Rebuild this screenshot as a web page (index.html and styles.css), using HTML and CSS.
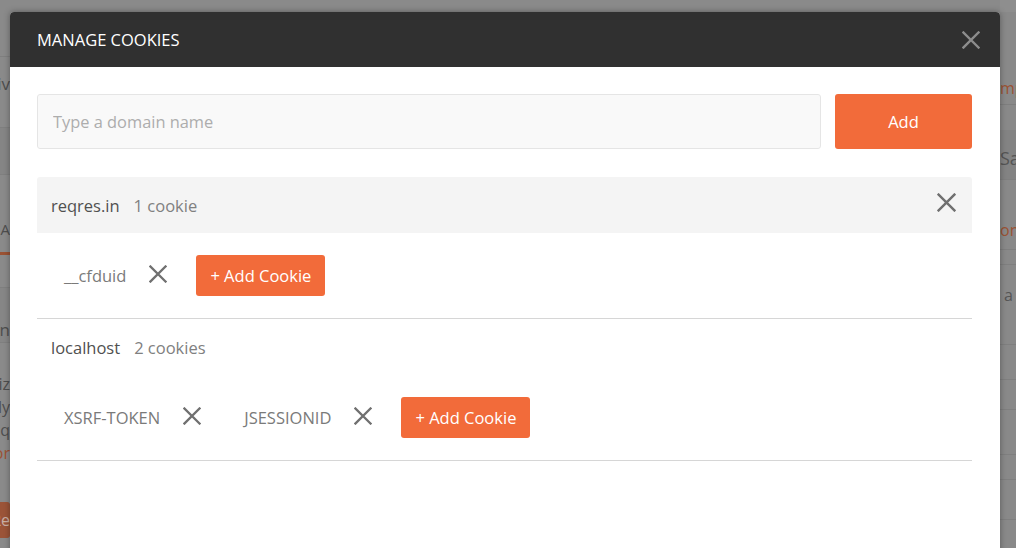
FILE: index.html
```html
<!DOCTYPE html>
<html>
<head>
<meta charset="utf-8">
<title>Manage Cookies</title>
<link rel="stylesheet" href="styles.css">
</head>
<body>
<div class="bg">
  <div class="strip strip-left">
    <div class="bl bl-top"></div>
    <div class="bl bl-title"><span class="bt">Priv</span></div>
    <div class="bl bl-band"></div>
    <div class="bl bl-tabs"><span class="bt bt-tab">A</span></div>
    <div class="bl bl-gap"></div>
    <div class="bl bl-band2"><span class="bt">n</span></div>
    <div class="bl-para">
      <span class="bt">iz</span>
      <span class="bt">lly</span>
      <span class="bt">q</span>
      <span class="bt bt-orange">or</span>
    </div>
    <div class="bl-btn"><span class="bt bt-light">Re</span></div>
  </div>
  <div class="mid"></div>
  <div class="strip strip-right">
    <div class="br br-top"></div>
    <div class="br br-imp"><span class="rt rt-orange">mp</span></div>
    <div class="br br-sp"></div>
    <div class="br br-band"><span class="rt rt-big">Sa</span></div>
    <div class="br br-on"><span class="rt rt-orange">on</span></div>
    <div class="br br-thin"></div>
    <div class="br br-a"><span class="rt rt-a">a</span></div>
    <div class="br br-r1"></div>
    <div class="br br-r2"></div>
    <div class="br br-r3"></div>
    <div class="br br-r4"></div>
    <div class="br br-r5"></div>
  </div>
</div>

<div class="modal">
  <div class="modal-header">
    <span class="modal-title">MANAGE COOKIES</span>
    <span class="modal-close">
      <svg width="18" height="18" viewBox="0 0 18 18"><path d="M1.5 1.5 L16.5 16.5 M16.5 1.5 L1.5 16.5" stroke="#8c8c8c" stroke-width="2.4" stroke-linecap="square" fill="none"/></svg>
    </span>
  </div>
  <div class="modal-body">
    <div class="add-row">
      <input class="domain-input" type="text" placeholder="Type a domain name">
      <button class="btn btn-add">Add</button>
    </div>

    <div class="domains">
      <div class="domain">
        <div class="domain-head selected">
          <span class="domain-name">reqres.in</span>
          <span class="domain-count">1 cookie</span>
          <span class="domain-remove">
            <svg width="19" height="19" viewBox="0 0 18 18"><path d="M1.5 1.5 L16.5 16.5 M16.5 1.5 L1.5 16.5" stroke="#707070" stroke-width="2.3" stroke-linecap="square" fill="none"/></svg>
          </span>
        </div>
        <div class="cookies">
          <span class="cookie">
            <span class="cookie-name">__cfduid</span>
            <svg class="cookie-x" width="18" height="18" viewBox="0 0 18 18"><path d="M1.5 1.5 L16.5 16.5 M16.5 1.5 L1.5 16.5" stroke="#707070" stroke-width="2.3" stroke-linecap="square" fill="none"/></svg>
          </span>
          <button class="btn btn-cookie">+ Add Cookie</button>
        </div>
      </div>

      <div class="domain">
        <div class="domain-head">
          <span class="domain-name">localhost</span>
          <span class="domain-count">2 cookies</span>
        </div>
        <div class="cookies">
          <span class="cookie">
            <span class="cookie-name">XSRF-TOKEN</span>
            <svg class="cookie-x" width="18" height="18" viewBox="0 0 18 18"><path d="M1.5 1.5 L16.5 16.5 M16.5 1.5 L1.5 16.5" stroke="#707070" stroke-width="2.3" stroke-linecap="square" fill="none"/></svg>
          </span>
          <span class="cookie">
            <span class="cookie-name">JSESSIONID</span>
            <svg class="cookie-x" width="18" height="18" viewBox="0 0 18 18"><path d="M1.5 1.5 L16.5 16.5 M16.5 1.5 L1.5 16.5" stroke="#707070" stroke-width="2.3" stroke-linecap="square" fill="none"/></svg>
          </span>
          <button class="btn btn-cookie">+ Add Cookie</button>
        </div>
      </div>
    </div>
  </div>
</div>
</body>
</html>
```

FILE: styles.css
```css
* { box-sizing: border-box; }

html, body {
  margin: 0;
  padding: 0;
  width: 1016px;
  height: 548px;
  overflow: hidden;
  font-family: "Open Sans", "Liberation Sans", sans-serif;
  background: #8a8a8a;
}

/* ---------- dimmed background app ---------- */
.bg {
  display: grid;
  grid-template-columns: 10px 990px 16px;
  height: 548px;
}

.strip {
  display: flex;
  flex-direction: column;
  overflow: hidden;
}

.bl, .br {
  display: flex;
  flex-shrink: 0;
  align-items: center;
  border-bottom: 1px solid #7f7f7f;
}

.strip-left .bl, .bl-btn {
  justify-content: flex-end;
}

.bt {
  white-space: nowrap;
  font-size: 17px;
  color: #4e4e4e;
}

.bl-top { height: 57px; }
.bl-title { height: 71px; align-items: flex-start; padding-top: 15px; }
.bl-band { height: 47px; background: #858585; }
.bl-tabs {
  height: 80px;
  border-bottom: 3px solid #9a5234;
  align-items: flex-start;
  padding-top: 44px;
}
.bt-tab { font-size: 15px; }
.bl-gap { height: 33px; }
.bl-band2 {
  height: 55px;
  background: #868686;
  align-items: flex-end;
  padding-bottom: 1px;
}
.bl-para {
  display: flex;
  flex-direction: column;
  align-items: flex-end;
  flex-shrink: 0;
  padding-top: 30px;
  height: 159px;
}
.bl-para .bt { line-height: 23px; font-size: 16px; }
.bt-orange { color: #9c5234; }
.bl-btn {
  display: flex;
  flex-shrink: 0;
  align-items: center;
  height: 36px;
  background: #9b5438;
  border-radius: 0 3px 3px 0;
}
.bt-light { color: #c9b0a6; font-size: 16px; }

.strip-right { background: #898989; }
.rt {
  white-space: nowrap;
  font-size: 16px;
  color: #555;
}
.rt-orange { color: #9b5234; }
.rt-big { font-size: 18px; }
.rt-a { padding-left: 4px; }

.br-top { height: 12px; border-bottom: none; background: #8e8e8e; }
.br-imp { height: 93px; padding-top: 60px; border-bottom-color: #7e7e7e; }
.br-sp { height: 25px; border-bottom: none; }
.br-band { height: 50px; background: #838383; padding-top: 6px; }
.br-on { height: 70px; padding-top: 30px; }
.br-thin { height: 15px; }
.br-a { height: 80px; padding-bottom: 20px; }
.br-r1 { height: 35px; }
.br-r2 { height: 30px; }
.br-r3 { height: 45px; }
.br-r4 { height: 25px; }
.br-r5 { height: 40px; }

/* ---------- modal ---------- */
.modal {
  position: absolute;
  left: 10px;
  top: 12px;
  width: 990px;
  height: 560px;
  background: #fff;
  border-radius: 4px 4px 0 0;
  box-shadow: 0 0 6px rgba(0, 0, 0, 0.35);
  overflow: hidden;
}

.modal-header {
  height: 55px;
  background: #303030;
  display: flex;
  align-items: center;
  justify-content: space-between;
  padding: 0 20px 0 27px;
}

.modal-title {
  color: #fff;
  font-size: 16.5px;
}

.modal-close {
  display: flex;
  width: 18px;
  height: 18px;
}

.modal-body {
  padding: 27px 28px 0 27px;
}

.add-row {
  display: flex;
  gap: 14px;
  height: 55px;
}

.domain-input {
  flex: 1;
  height: 55px;
  border: 1px solid #e5e5e5;
  border-radius: 3px;
  background: #f9f9f9;
  padding: 0 15px;
  font-family: "Open Sans", "Liberation Sans", sans-serif;
  font-size: 16.4px;
  color: #505050;
  outline: none;
}
.domain-input::placeholder { color: #adadad; }

.btn {
  border: none;
  border-radius: 3px;
  background: #f26b3a;
  color: #fff;
  font-family: "Open Sans", "Liberation Sans", sans-serif;
  font-size: 16.5px;
  cursor: pointer;
}

.btn-add {
  width: 137px;
  height: 55px;
}

.domains {
  margin-top: 28px;
}

.domain {
  border-bottom: 1px solid #d6d6d6;
}

.domain-head {
  display: flex;
  align-items: center;
  height: 56px;
  padding: 0 16px 0 14px;
  border-radius: 3px 3px 0 0;
}
.domain-head.selected { background: #f4f4f4; }

.domain-name {
  font-size: 16.5px;
  color: #505050;
}
.domain-count {
  font-size: 16.5px;
  color: #808080;
  margin-left: 14px;
}
.domain-remove {
  margin-left: auto;
  margin-bottom: 6px;
  display: flex;
}

.cookies {
  display: flex;
  align-items: center;
  gap: 15px;
  padding: 22px 0 22px 13px;
}

.cookie {
  display: flex;
  align-items: center;
  gap: 23px;
  padding: 0 14px;
}

.cookie-name {
  font-size: 16.5px;
  color: #7a7a7a;
}

.cookie-x {
  margin-bottom: 3px;
}

.btn-cookie {
  height: 41px;
  padding: 0 14px;
}
```
